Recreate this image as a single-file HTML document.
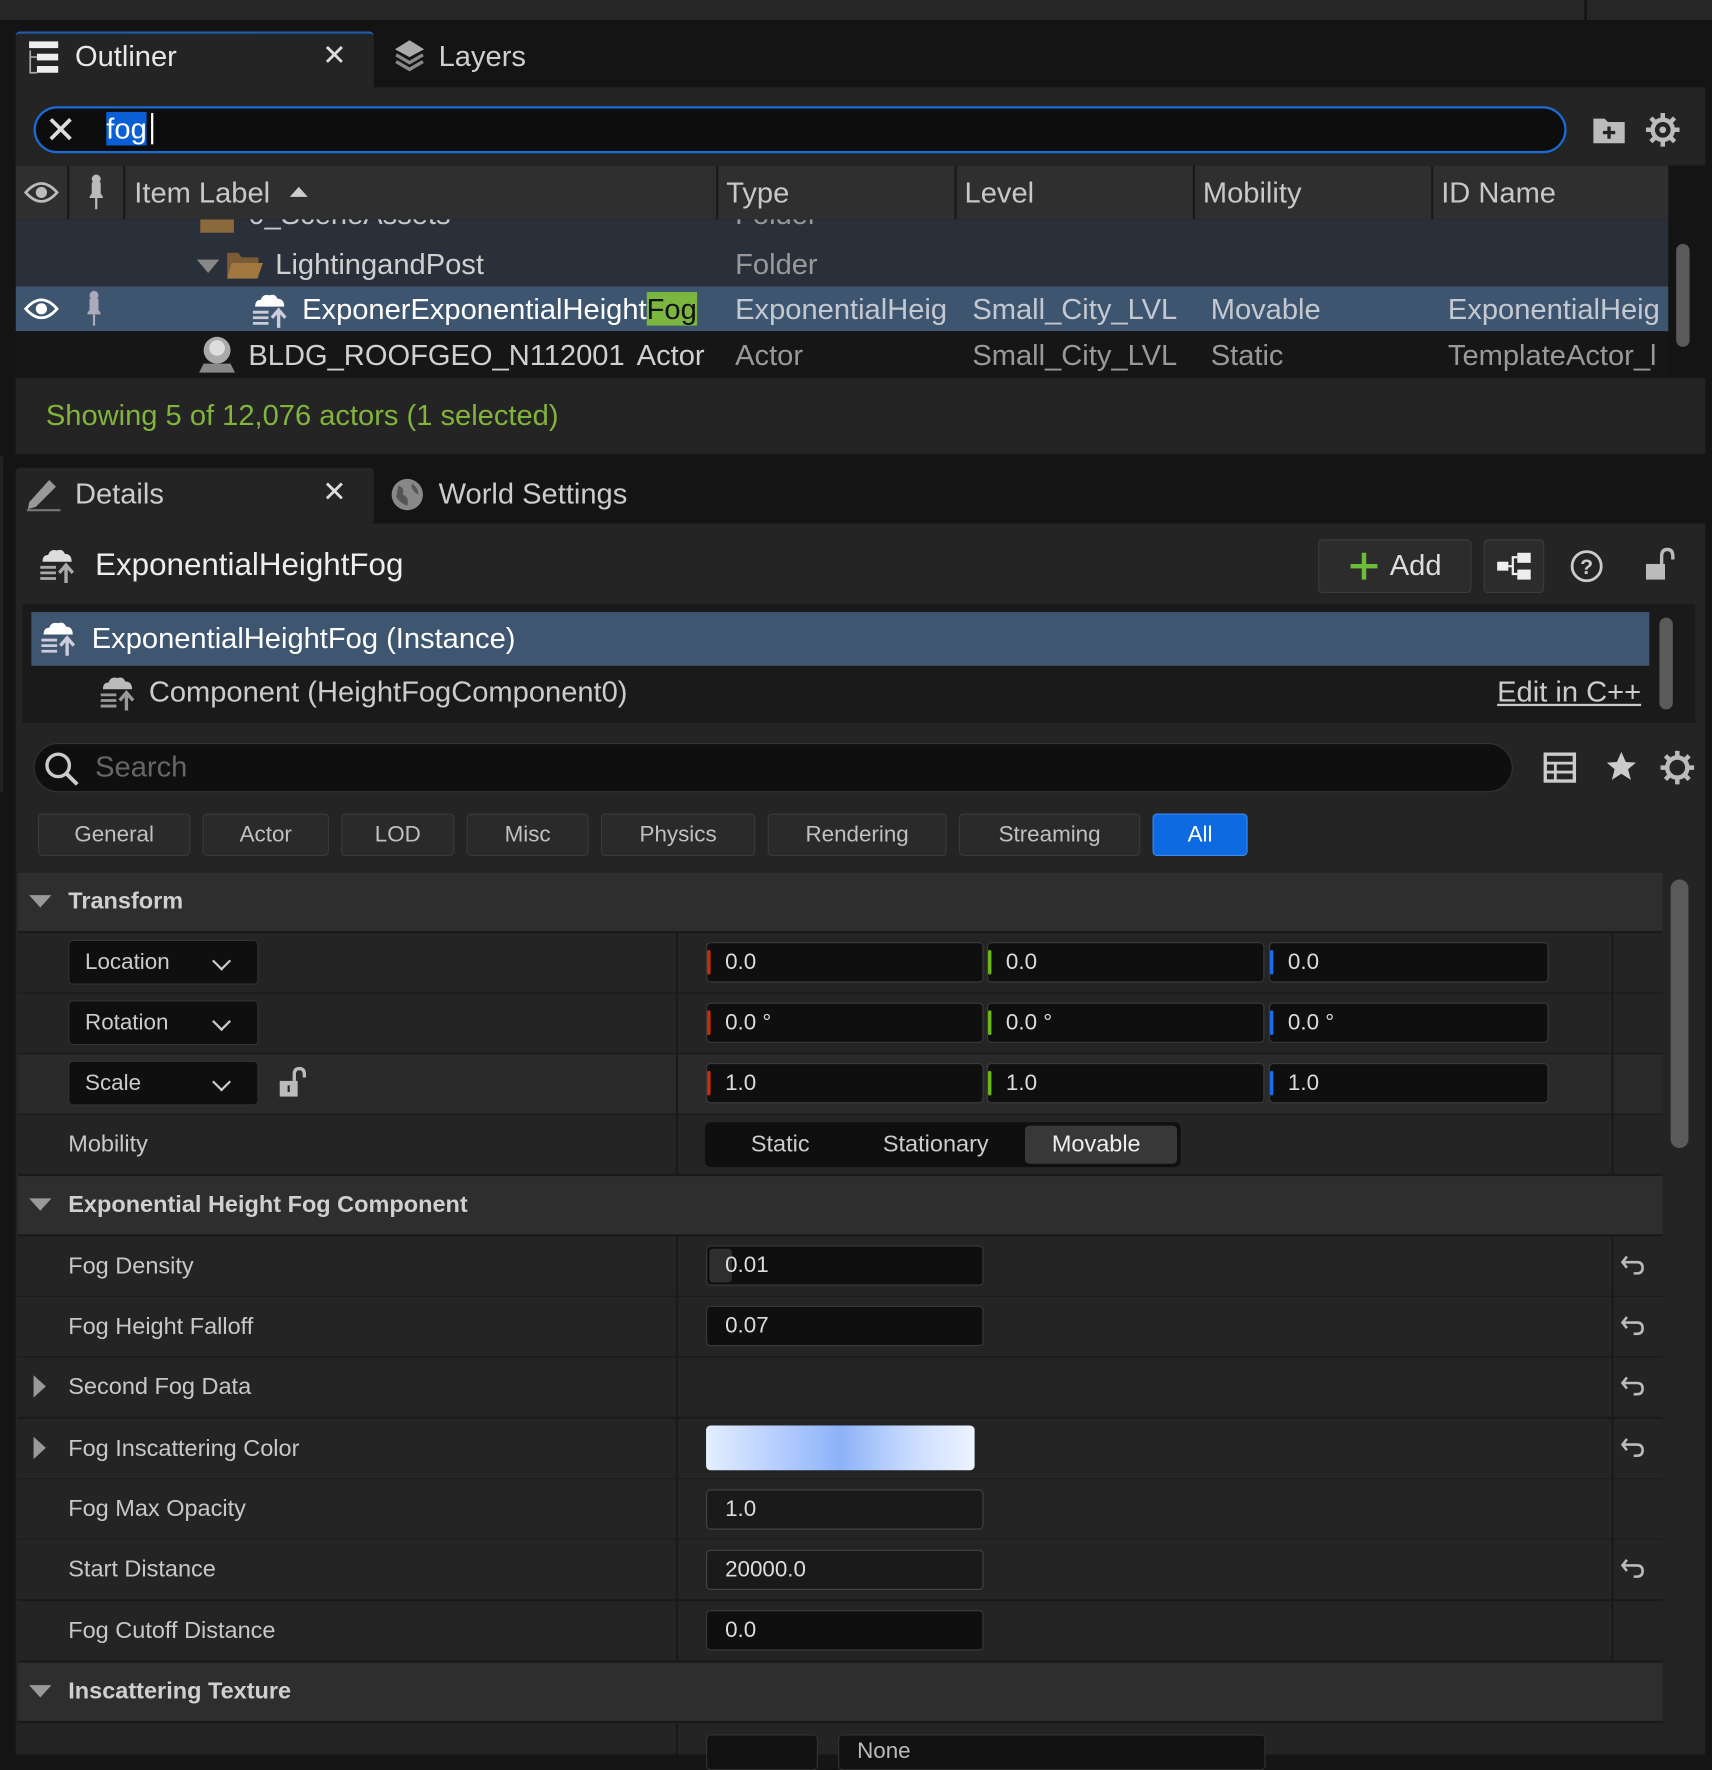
<!DOCTYPE html>
<html><head><meta charset="utf-8"><style>
html,body{margin:0;padding:0;background:#151515;width:1712px;height:1754px;overflow:hidden}
#w{position:absolute;left:0;top:0;width:1530px;height:1568px;transform:scale(1.11895);transform-origin:0 0;font-family:"Liberation Sans",sans-serif;color:#c0c0c0;background:#151515}
.a{position:absolute}
.t{position:absolute;white-space:nowrap}
.ib{position:absolute;background:#0f0f0f;border:1px solid #3a3a3a;border-radius:4px;box-sizing:border-box;height:36px;color:#ddd;font-size:20px;line-height:34px;padding-left:16px}
.row{position:absolute;left:16px;width:1470px;height:53px;background:#242424}
.row .l{position:absolute;left:45px;top:0;line-height:53px;font-size:21px;color:#c8c8c8}
.hdr{position:absolute;left:16px;width:1470px;height:52px;background:#2e2e2e}
.hdr .l{position:absolute;left:45px;line-height:52px;font-size:21px;font-weight:bold;color:#d0d0d0}
.tri{position:absolute;left:10px;top:20px;width:0;height:0;border-left:10px solid transparent;border-right:10px solid transparent;border-top:11px solid #999}
.trr{position:absolute;left:14px;top:16px;width:0;height:0;border-top:10px solid transparent;border-bottom:10px solid transparent;border-left:11px solid #999}
.vl{position:absolute;left:588px;top:0;width:2px;height:100%;background:#1a1a1a}
.vr{position:absolute;left:1424px;top:0;width:2px;height:100%;background:#1a1a1a}
.bar{position:absolute;left:0;top:6px;width:3px;height:22px;border-radius:2px}
.dd{position:absolute;left:45px;top:6px;width:170px;height:40px;background:#0f0f0f;border:1px solid #333;border-radius:4px;box-sizing:border-box;font-size:20px;line-height:38px;padding-left:14px;color:#ccc}
.chev{position:absolute;right:26px;top:12px;width:10px;height:10px;border-right:2.5px solid #ccc;border-bottom:2.5px solid #ccc;transform:rotate(45deg)}
.undo{position:absolute;left:1432px;top:14px}
.fb{position:absolute;top:727px;height:38px;background:#2a2a2a;border:1px solid #3a3a3a;border-radius:4px;box-sizing:border-box;font-size:20px;line-height:36px;text-align:center;color:#c0c0c0}
</style></head><body><div id="w">
<div class="a" style="left:0;top:0;width:1530px;height:18px;background:#262626"></div>
<div class="a" style="left:1416px;top:0;width:2px;height:18px;background:#111"></div>
<div class="a" style="left:0;top:18px;width:1530px;height:390px;background:#141414"></div>
<div class="a" style="left:14px;top:28px;width:320px;height:50px;background:#242424;border-top:2px solid #1f5fb0;border-radius:4px 4px 0 0"></div>
<svg class="a" style="left:24px;top:36px" width="30" height="32" viewBox="0 0 30 32"><rect x="2" y="1" width="26" height="6" fill="#eee"/><rect x="9" y="12" width="19" height="6" fill="#eee"/><rect x="9" y="23" width="19" height="6" fill="#eee"/><path d="M3 9V29H9M3 15H9" stroke="#aaa" stroke-width="1.5" fill="none"/></svg>
<div class="t" style="left:67px;top:35px;font-size:26px;color:#e8e8e8">Outliner</div>
<div class="t" style="left:288px;top:34px;font-size:26px;color:#ddd">✕</div>
<svg class="a" style="left:350px;top:34px" width="32" height="34" viewBox="0 0 32 34"><path d="M16 2L29 10L16 17L3 10Z" fill="#aaa"/><path d="M4 15L16 22L28 15M4 21L16 28L28 21" stroke="#888" stroke-width="3" fill="none"/></svg>
<div class="t" style="left:392px;top:35px;font-size:26px;color:#cfcfcf">Layers</div>
<div class="a" style="left:14px;top:78px;width:1510px;height:70px;background:#242424"></div>
<div class="a" style="left:30px;top:95px;width:1370px;height:42px;background:#0d0d0d;border:2px solid #1a6cd6;border-radius:22px;box-sizing:border-box"></div>
<div class="t" style="left:40px;top:97px;font-size:34px;color:#ddd">✕</div>
<div class="t" style="left:95px;top:100px;font-size:26px;line-height:30px;color:#fff;background:#0a5fd6">fog</div>
<div class="a" style="left:135px;top:101px;width:2px;height:28px;background:#fff"></div>
<svg class="a" style="left:1422px;top:102px" width="32" height="28" viewBox="0 0 32 28"><path d="M2 4H12L15 7H30V26H2Z" fill="#bbb"/><path d="M16 11V22M10.5 16.5H21.5" stroke="#242424" stroke-width="3"/></svg>
<svg class="a" style="left:1470px;top:100px" width="32" height="32" viewBox="0 0 32 32"><circle cx="16" cy="16" r="9" fill="none" stroke="#bbb" stroke-width="4"/><circle cx="16" cy="16" r="3" fill="#bbb"/><g stroke="#bbb" stroke-width="4"><path d="M16 1V6M16 26V31M1 16H6M26 16H31M5.4 5.4L9 9M23 23L26.6 26.6M5.4 26.6L9 23M23 9L26.6 5.4"/></g></svg>
<div class="a" style="left:14px;top:148px;width:1477px;height:48px;background:#2f2f2f"></div>
<div class="a" style="left:60px;top:148px;width:2px;height:48px;background:#1a1a1a"></div>
<div class="a" style="left:110px;top:148px;width:2px;height:48px;background:#1a1a1a"></div>
<div class="a" style="left:640px;top:148px;width:2px;height:48px;background:#1a1a1a"></div>
<div class="a" style="left:853px;top:148px;width:2px;height:48px;background:#1a1a1a"></div>
<div class="a" style="left:1066px;top:148px;width:2px;height:48px;background:#1a1a1a"></div>
<div class="a" style="left:1279px;top:148px;width:2px;height:48px;background:#1a1a1a"></div>
<svg class="a" style="left:21px;top:160px" width="32" height="24" viewBox="0 0 32 24"><path d="M2 12Q16 -4 30 12Q16 28 2 12Z" fill="none" stroke="#bbb" stroke-width="2.5"/><circle cx="16" cy="12" r="5" fill="#bbb"/></svg>
<svg class="a" style="left:76px;top:155px" width="20" height="34" viewBox="0 0 20 34"><circle cx="10" cy="5" r="4" fill="#bbb"/><path d="M6 8H14V18Q16 20 16 22H4Q4 20 6 18Z" fill="#bbb"/><path d="M10 22V32" stroke="#bbb" stroke-width="2"/></svg>
<div class="t" style="left:120px;top:157px;font-size:26px;color:#c8c8c8">Item Label</div>
<div class="a" style="left:259px;top:167px;border-left:8px solid transparent;border-right:8px solid transparent;border-bottom:9px solid #ccc"></div>
<div class="t" style="left:649px;top:157px;font-size:26px;color:#c8c8c8">Type</div>
<div class="t" style="left:862px;top:157px;font-size:26px;color:#c8c8c8">Level</div>
<div class="t" style="left:1075px;top:157px;font-size:26px;color:#c8c8c8">Mobility</div>
<div class="t" style="left:1288px;top:157px;font-size:26px;color:#c8c8c8">ID Name</div>
<div class="a" style="left:14px;top:196px;width:1477px;height:142px;overflow:hidden">
 <div class="a" style="left:0;top:0;width:1477px;height:60px;background:#2a303a"></div>
 <div class="t" style="left:208px;top:-20px;font-size:26px;color:#c8c8c8">0_SceneAssets</div>
 <div class="a" style="left:165px;top:-8px;width:30px;height:20px;background:#8a6a3c"></div>
 <div class="t" style="left:643px;top:-20px;font-size:26px;color:#999">Folder</div>
 <div class="a" style="left:162px;top:36px;border-left:10px solid transparent;border-right:10px solid transparent;border-top:12px solid #888"></div>
 <svg class="a" style="left:188px;top:27px" width="34" height="28" viewBox="0 0 34 28"><path d="M1 3H11L14 7H29V25H1Z" fill="#7a5b33"/><path d="M5 12H33L28 26H1Z" fill="#a07840"/></svg>
 <div class="t" style="left:232px;top:25px;font-size:26px;color:#d0d0d0">LightingandPost</div>
 <div class="t" style="left:643px;top:25px;font-size:26px;color:#999">Folder</div>
 <div class="a" style="left:0;top:60px;width:1477px;height:40px;background:#3e556f"></div>
 <svg class="a" style="left:7px;top:68px" width="32" height="24" viewBox="0 0 32 24"><path d="M2 12Q16 -4 30 12Q16 28 2 12Z" fill="none" stroke="#fff" stroke-width="2.5"/><circle cx="16" cy="12" r="5" fill="#fff"/></svg>
 <svg class="a" style="left:60px;top:63px" width="20" height="34" viewBox="0 0 20 34"><circle cx="10" cy="5" r="4" fill="#aab"/><path d="M6 8H14V18Q16 20 16 22H4Q4 20 6 18Z" fill="#aab"/><path d="M10 22V32" stroke="#aab" stroke-width="2"/></svg>
 <svg class="a" style="left:210px;top:64px" width="34" height="34" viewBox="0 0 34 34"><path d="M4 14Q4 8 9 8Q11 2 17 4Q22 2 24 7Q30 7 30 14Z" fill="#fff"/><path d="M2 19H16M2 24H16M2 29H16" stroke="#ccd" stroke-width="2.5"/><path d="M25 33V18M19 24L25 17L31 24" stroke="#ccd" stroke-width="3" fill="none"/></svg>
 <div class="t" style="left:256px;top:65px;font-size:26px;color:#fff">ExponerExponentialHeight<span style="background:#7ab640;color:#111">Fog</span></div>
 <div class="t" style="left:643px;top:65px;font-size:26px;color:#c4c8d0">ExponentialHeig</div>
 <div class="t" style="left:855px;top:65px;font-size:26px;color:#c4c8d0">Small_City_LVL</div>
 <div class="t" style="left:1068px;top:65px;font-size:26px;color:#c4c8d0">Movable</div>
 <div class="t" style="left:1280px;top:65px;font-size:26px;color:#c4c8d0">ExponentialHeig</div>
 <div class="a" style="left:0;top:100px;width:1477px;height:42px;background:#161616"></div>
 <svg class="a" style="left:162px;top:103px" width="36" height="36" viewBox="0 0 36 36"><circle cx="18" cy="14" r="12" fill="#aaa"/><circle cx="18" cy="12" r="7" fill="#ddd"/><path d="M6 26L2 34H34L30 26Z" fill="#888"/></svg>
 <div class="t" style="left:208px;top:106px;font-size:26px;color:#d0d0d0">BLDG_ROOFGEO_N112001</div>
 <div class="t" style="left:555px;top:106px;font-size:26px;color:#d0d0d0">Actor</div>
 <div class="t" style="left:643px;top:106px;font-size:26px;color:#999">Actor</div>
 <div class="t" style="left:855px;top:106px;font-size:26px;color:#999">Small_City_LVL</div>
 <div class="t" style="left:1068px;top:106px;font-size:26px;color:#999">Static</div>
 <div class="t" style="left:1280px;top:106px;font-size:26px;color:#999">TemplateActor_l</div>
</div>
<div class="a" style="left:1498px;top:218px;width:12px;height:92px;background:#5a5a5a;border-radius:6px"></div>
<div class="a" style="left:14px;top:338px;width:1510px;height:68px;background:#242424"></div>
<div class="t" style="left:41px;top:356px;font-size:26px;color:#82b43c">Showing 5 of 12,076 actors (1 selected)</div>
<div class="a" style="left:0;top:408px;width:1530px;height:1160px;background:#141414"></div>
<div class="a" style="left:14px;top:418px;width:320px;height:50px;background:#242424;border-radius:4px 4px 0 0"></div>
<svg class="a" style="left:22px;top:425px" width="34" height="32" viewBox="0 0 34 32"><path d="M4 24L22 4L28 10L10 28L3 30Z" fill="#999"/><path d="M2 31H32" stroke="#777" stroke-width="2"/></svg>
<div class="t" style="left:67px;top:426px;font-size:26px;color:#ccc">Details</div>
<div class="t" style="left:288px;top:424px;font-size:26px;color:#ddd">✕</div>
<svg class="a" style="left:348px;top:426px" width="32" height="32" viewBox="0 0 32 32"><circle cx="16" cy="16" r="14" fill="#888"/><path d="M8 8Q14 10 12 16Q18 18 16 26Q10 24 6 18Z" fill="#555"/><path d="M20 6Q26 10 26 16Q22 14 20 10Z" fill="#555"/></svg>
<div class="t" style="left:392px;top:426px;font-size:26px;color:#ccc">World Settings</div>
<div class="a" style="left:14px;top:468px;width:1510px;height:1100px;background:#242424"></div>
<svg class="a" style="left:34px;top:488px" width="34" height="34" viewBox="0 0 34 34"><path d="M4 14Q4 8 9 8Q11 2 17 4Q22 2 24 7Q30 7 30 14Z" fill="#ddd"/><path d="M2 19H16M2 24H16M2 29H16" stroke="#aaa" stroke-width="2.5"/><path d="M25 33V18M19 24L25 17L31 24" stroke="#aaa" stroke-width="3" fill="none"/></svg>
<div class="t" style="left:85px;top:489px;font-size:28px;color:#eee">ExponentialHeightFog</div>
<div class="a" style="left:1178px;top:482px;width:137px;height:48px;background:#2c2c2c;border:1px solid #3c3c3c;border-radius:4px;box-sizing:border-box"></div>
<svg class="a" style="left:1204px;top:491px" width="30" height="30"><path d="M15 3V27M3 15H27" stroke="#6cbe3a" stroke-width="4"/></svg>
<div class="t" style="left:1242px;top:490px;font-size:26px;color:#ddd">Add</div>
<div class="a" style="left:1326px;top:482px;width:54px;height:48px;background:#2c2c2c;border:1px solid #3c3c3c;border-radius:4px;box-sizing:border-box"></div>
<svg class="a" style="left:1336px;top:492px" width="34" height="28" viewBox="0 0 34 28"><rect x="2" y="10" width="10" height="8" fill="#eee"/><rect x="20" y="2" width="12" height="9" fill="#eee"/><rect x="20" y="17" width="12" height="9" fill="#eee"/><path d="M12 14H16V6H20M16 14V21H20" stroke="#eee" stroke-width="2" fill="none"/></svg>
<svg class="a" style="left:1402px;top:490px" width="32" height="32"><circle cx="16" cy="16" r="13" fill="none" stroke="#ccc" stroke-width="2.5"/><text x="16" y="23" font-size="19" font-family="Liberation Sans" font-weight="bold" fill="#ccc" text-anchor="middle">?</text></svg>
<svg class="a" style="left:1468px;top:488px" width="32" height="34" viewBox="0 0 32 34"><rect x="3" y="16" width="17" height="14" fill="#bbb"/><path d="M17 16V9Q17 3 22 3Q27 3 27 9V12" stroke="#bbb" stroke-width="3" fill="none"/></svg>
<div class="a" style="left:20px;top:540px;width:1495px;height:106px;background:#1a1a1a"></div>
<div class="a" style="left:28px;top:547px;width:1446px;height:48px;background:#3f5670"></div>
<svg class="a" style="left:35px;top:553px" width="34" height="34" viewBox="0 0 34 34"><path d="M4 14Q4 8 9 8Q11 2 17 4Q22 2 24 7Q30 7 30 14Z" fill="#fff"/><path d="M2 19H16M2 24H16M2 29H16" stroke="#ccd" stroke-width="2.5"/><path d="M25 33V18M19 24L25 17L31 24" stroke="#ccd" stroke-width="3" fill="none"/></svg>
<div class="t" style="left:82px;top:555px;font-size:26px;color:#fff">ExponentialHeightFog (Instance)</div>
<svg class="a" style="left:88px;top:602px" width="34" height="34" viewBox="0 0 34 34"><path d="M4 14Q4 8 9 8Q11 2 17 4Q22 2 24 7Q30 7 30 14Z" fill="#bbb"/><path d="M2 19H16M2 24H16M2 29H16" stroke="#999" stroke-width="2.5"/><path d="M25 33V18M19 24L25 17L31 24" stroke="#999" stroke-width="3" fill="none"/></svg>
<div class="t" style="left:133px;top:603px;font-size:26px;color:#ccc">Component (HeightFogComponent0)</div>
<div class="t" style="left:1338px;top:603px;font-size:26px;color:#ccc;text-decoration:underline">Edit in C++</div>
<div class="a" style="left:1483px;top:552px;width:12px;height:82px;background:#5a5a5a;border-radius:6px"></div>
<div class="a" style="left:30px;top:664px;width:1322px;height:44px;background:#0f0f0f;border:1px solid #333;border-radius:22px;box-sizing:border-box"></div>
<svg class="a" style="left:38px;top:670px" width="34" height="34"><circle cx="14" cy="14" r="10" fill="none" stroke="#ccc" stroke-width="3"/><path d="M21 21L31 31" stroke="#ccc" stroke-width="3.5"/></svg>
<div class="t" style="left:85px;top:670px;font-size:26px;color:#666">Search</div>
<svg class="a" style="left:1379px;top:671px" width="30" height="30"><rect x="2" y="3" width="26" height="24" fill="none" stroke="#ccc" stroke-width="3"/><path d="M2 11H28M2 19H28M11 11V27" stroke="#ccc" stroke-width="2.5"/></svg>
<svg class="a" style="left:1434px;top:670px" width="30" height="30" viewBox="0 0 30 30"><path d="M15 2L19 11L28 11.5L21 17.5L23.5 27L15 21.5L6.5 27L9 17.5L2 11.5L11 11Z" fill="#ccc"/></svg>
<svg class="a" style="left:1483px;top:670px" width="32" height="32"><circle cx="16" cy="16" r="9" fill="none" stroke="#bbb" stroke-width="4"/><g stroke="#bbb" stroke-width="4"><path d="M16 1V6M16 26V31M1 16H6M26 16H31M5.4 5.4L9 9M23 23L26.6 26.6M5.4 26.6L9 23M23 9L26.6 5.4"/></g></svg>
<div class="fb" style="left:34px;width:136px">General</div>
<div class="fb" style="left:181px;width:113px">Actor</div>
<div class="fb" style="left:305px;width:101px">LOD</div>
<div class="fb" style="left:417px;width:109px">Misc</div>
<div class="fb" style="left:537px;width:138px">Physics</div>
<div class="fb" style="left:686px;width:160px">Rendering</div>
<div class="fb" style="left:857px;width:162px">Streaming</div>
<div class="fb" style="left:1030px;width:85px;background:#0e6ae0;border-color:#3a8af0;color:#fff">All</div>
<div class="a" style="left:16px;top:780px;width:1470px;height:788px;background:#1a1a1a"></div>
<div class="hdr" style="top:780px"><div class="tri"></div><div class="l">Transform</div></div>
<div class="row" style="top:834px"><div class="vl"></div><div class="vr"></div>
 <div class="dd">Location<div class="chev"></div></div>
 <div class="ib" style="left:615px;top:8px;width:248px"><div class="bar" style="background:#d02a10"></div>0.0</div>
 <div class="ib" style="left:866px;top:8px;width:248px"><div class="bar" style="background:#6aba10"></div>0.0</div>
 <div class="ib" style="left:1118px;top:8px;width:250px"><div class="bar" style="background:#1a6cf0"></div>0.0</div></div>
<div class="row" style="top:888px"><div class="vl"></div><div class="vr"></div>
 <div class="dd">Rotation<div class="chev"></div></div>
 <div class="ib" style="left:615px;top:8px;width:248px"><div class="bar" style="background:#d02a10"></div>0.0 °</div>
 <div class="ib" style="left:866px;top:8px;width:248px"><div class="bar" style="background:#6aba10"></div>0.0 °</div>
 <div class="ib" style="left:1118px;top:8px;width:250px"><div class="bar" style="background:#1a6cf0"></div>0.0 °</div></div>
<div class="row" style="top:942px;background:#2a2a2a"><div class="vl"></div><div class="vr"></div>
 <div class="dd">Scale<div class="chev"></div></div>
 <svg class="a" style="left:232px;top:10px" width="30" height="32" viewBox="0 0 30 32"><rect x="2" y="14" width="16" height="14" fill="#bbb"/><path d="M15 14V8Q15 3 19.5 3Q24 3 24 8V11" stroke="#bbb" stroke-width="3" fill="none"/><rect x="9" y="18" width="2" height="6" fill="#2a2a2a"/></svg>
 <div class="ib" style="left:615px;top:8px;width:248px"><div class="bar" style="background:#d02a10"></div>1.0</div>
 <div class="ib" style="left:866px;top:8px;width:248px"><div class="bar" style="background:#6aba10"></div>1.0</div>
 <div class="ib" style="left:1118px;top:8px;width:250px"><div class="bar" style="background:#1a6cf0"></div>1.0</div></div>
<div class="row" style="top:996px"><div class="vl"></div><div class="vr"></div><div class="l">Mobility</div>
 <div class="a" style="left:614px;top:7px;width:425px;height:40px;background:#0f0f0f;border-radius:5px"></div>
 <div class="a" style="left:900px;top:10px;width:136px;height:34px;background:#383838;border-radius:4px"></div>
 <div class="t" style="left:655px;top:15px;font-size:21px;color:#ccc">Static</div>
 <div class="t" style="left:773px;top:15px;font-size:21px;color:#ccc">Stationary</div>
 <div class="t" style="left:924px;top:15px;font-size:21px;color:#eee">Movable</div></div>
<div class="hdr" style="top:1051px"><div class="tri"></div><div class="l">Exponential Height Fog Component</div></div>
<svg width="0" height="0" style="position:absolute"><defs><g id="u"><path d="M6 4L2 9L6 14M2 9H15Q20 9 20 14Q20 19 15 19H12" stroke="#bbb" stroke-width="2.3" fill="none"/></g></defs></svg>
<div class="row" style="top:1105px"><div class="vl"></div><div class="vr"></div><div class="l">Fog Density</div>
 <div class="ib" style="left:615px;top:8px;width:248px;padding-left:0"><div class="a" style="left:2px;top:2px;width:20px;height:30px;background:#2e2e2e;border-radius:3px"></div><span style="position:relative;left:16px">0.01</span></div>
 <svg class="undo" width="24" height="24"><use href="#u"/></svg></div>
<div class="row" style="top:1159px"><div class="vl"></div><div class="vr"></div><div class="l">Fog Height Falloff</div>
 <div class="ib" style="left:615px;top:8px;width:248px">0.07</div><svg class="undo" width="24" height="24"><use href="#u"/></svg></div>
<div class="row" style="top:1213px"><div class="vl"></div><div class="vr"></div><div class="trr"></div><div class="l">Second Fog Data</div>
 <svg class="undo" width="24" height="24"><use href="#u"/></svg></div>
<div class="row" style="top:1268px"><div class="vl"></div><div class="vr"></div><div class="trr"></div><div class="l">Fog Inscattering Color</div>
 <div class="a" style="left:615px;top:6px;width:240px;height:40px;border-radius:4px;background:linear-gradient(90deg,#e4eeff 0%,#b8d0ff 25%,#8db2f8 50%,#c6daff 75%,#eef4ff 100%)"></div>
 <svg class="undo" width="24" height="24"><use href="#u"/></svg></div>
<div class="row" style="top:1322px"><div class="vl"></div><div class="vr"></div><div class="l">Fog Max Opacity</div>
 <div class="ib" style="left:615px;top:9px;width:248px;background:#1a1a1a;border-color:#444">1.0</div></div>
<div class="row" style="top:1376px"><div class="vl"></div><div class="vr"></div><div class="l">Start Distance</div>
 <div class="ib" style="left:615px;top:9px;width:248px;background:#1a1a1a;border-color:#444">20000.0</div><svg class="undo" width="24" height="24"><use href="#u"/></svg></div>
<div class="row" style="top:1431px"><div class="vl"></div><div class="vr"></div><div class="l">Fog Cutoff Distance</div>
 <div class="ib" style="left:615px;top:8px;width:248px">0.0</div></div>
<div class="hdr" style="top:1486px"><div class="tri"></div><div class="l">Inscattering Texture</div></div>
<div class="row" style="top:1540px;height:28px"><div class="vl"></div>
 <div class="a" style="left:615px;top:10px;width:98px;height:30px;background:#111;border:1px solid #333;border-radius:4px"></div>
 <div class="a" style="left:733px;top:10px;width:380px;height:30px;background:#111;border:1px solid #333;border-radius:4px"></div>
 <div class="t" style="left:750px;top:14px;font-size:20px;color:#bbb">None</div></div>
<div class="a" style="left:1493px;top:786px;width:16px;height:240px;background:#5a5a5a;border-radius:8px"></div>
<div class="a" style="left:0;top:408px;width:3px;height:300px;background:#222"></div>
</div></body></html>
